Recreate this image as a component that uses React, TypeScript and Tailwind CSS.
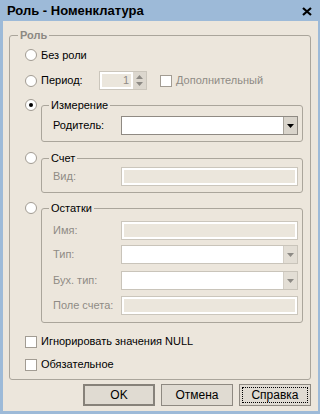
import React from "react";

function Radio({ checked = false }: { checked?: boolean }) {
  return (
    <span className="w-[12px] h-[12px] shrink-0 rounded-full bg-white border border-[#a29c93] flex items-center justify-center">
      {checked && <span className="w-[4px] h-[4px] rounded-full bg-black" />}
    </span>
  );
}

function Check() {
  return <span className="block w-[12px] h-[12px] shrink-0 bg-white border border-[#a29c93]" />;
}

function Arrow({ color }: { color: string }) {
  return (
    <svg width="7" height="4" viewBox="0 0 7 4">
      <path d="M0 0H7L3.5 4Z" fill={color} />
    </svg>
  );
}

// combo box with a drop-down button on the right
function Combo({ disabled = false }: { disabled?: boolean }) {
  return (
    <div
      className={
        disabled
          ? "flex-1 h-[19px] flex bg-white border border-[#c9c4ba]"
          : "flex-1 h-[19px] flex bg-white border border-[#8f8a83]"
      }
    >
      <div className="flex-1" />
      <div
        className={
          disabled
            ? "w-[14px] flex items-center justify-center bg-[#e3ded5] border-l border-[#d3cec5]"
            : "w-[14px] flex items-center justify-center bg-[#d9d4cb] border-l border-[#a8a39a]"
        }
      >
        <Arrow color={disabled ? "#8d8a85" : "#000"} />
      </div>
    </div>
  );
}

function Field() {
  return (
    <div className="flex-1 h-[19px] border border-[#cbc6bc]">
      <div className="h-full border-2 border-white bg-[#ebe6dc]" />
    </div>
  );
}

function Row({ label, mt, children }: { label: string; mt: string; children: React.ReactNode }) {
  return (
    <div className={`flex items-center ${mt}`}>
      <span className="w-[68px] text-[#8f8b85]">{label}</span>
      {children}
    </div>
  );
}

function Group({ title, children }: { title: string; children: React.ReactNode }) {
  return (
    <fieldset className="flex-1 border border-[#aaa59b] rounded-[3px] min-w-0">
      <legend className="ml-[7px] px-[2px] leading-[14px]">{title}</legend>
      {children}
    </fieldset>
  );
}

function Button({ label, main = false, focus = false }: { label: string; main?: boolean; focus?: boolean }) {
  return (
    <div
      className={
        main
          ? "w-[72px] h-[22px] border-2 border-[#87827a] bg-[#e0dbd2] flex items-center justify-center"
          : "w-[72px] h-[22px] border border-[#8e8981] bg-[#e0dbd2] flex items-center justify-center p-[2px]"
      }
    >
      <span
        className={
          focus
            ? "w-full h-full border border-dotted border-black flex items-center justify-center text-[12px]"
            : "text-[12px]"
        }
      >
        {label}
      </span>
    </div>
  );
}

export default function App() {
  return (
    <div className="w-[320px] h-[414px] bg-[#9dbad8] flex flex-col font-['Liberation_Sans',Arial,sans-serif] text-[11px] leading-[13px] text-black">
      <div className="h-[21px] shrink-0 flex items-center justify-between pl-[7px] pr-[8px]">
        <span className="text-[13px] font-bold">Роль - Номенклатура</span>
        <svg width="10" height="9" viewBox="0 0 10 9" className="mt-[1px]">
          <path d="M1 1L9 8M9 1L1 8" stroke="#000" strokeWidth="2.2" />
        </svg>
      </div>

      <div className="flex-1 ml-[3px] mr-[2px] mb-[3px] bg-[#ece6dc] flex flex-col pt-[7px] pl-[6px] pr-[7px] pb-[5px]">
        <fieldset className="border border-[#aaa59b] rounded-[3px] min-w-0">
          <legend className="ml-[8px] px-[2px] leading-[14px] font-bold text-[#8d8983]">Роль</legend>
          <div className="flex flex-col pl-[15px] pr-[7px] pb-[8px]">
            <div className="h-[26px] flex items-center gap-[4px]">
              <Radio />
              <span>Без роли</span>
            </div>

            <div className="h-[25px] flex items-center">
              <Radio />
              <span className="ml-[4px] w-[58px]">Период:</span>
              <div className="w-[48px] h-[19px] flex border border-[#cbc6bc]">
                <div className="flex-1 border-2 border-white bg-[#ebe6dc] flex items-center justify-end pr-[2px] text-[#8f8b85]">
                  1
                </div>
                <div className="w-[13px] bg-[#dcd7ce] flex flex-col items-center justify-center gap-[3px]">
                  <svg width="7" height="4" viewBox="0 0 7 4">
                    <path d="M0 4H7L3.5 0Z" fill="#8d8a85" />
                  </svg>
                  <Arrow color="#8d8a85" />
                </div>
              </div>
              <div className="ml-[13px] flex items-center gap-[4px]">
                <Check />
                <span className="text-[#8f8b85]">Дополнительный</span>
              </div>
            </div>

            <div className="mt-[5px] flex items-start gap-[4px]">
              <span className="h-[14px] flex items-center">
                <Radio checked />
              </span>
              <Group title="Измерение">
                <div className="pt-[4px] pb-[6px] pl-[11px] pr-[4px] flex items-center">
                  <span className="w-[68px]">Родитель:</span>
                  <Combo />
                </div>
              </Group>
            </div>

            <div className="mt-[9px] flex items-start gap-[4px]">
              <span className="h-[14px] flex items-center">
                <Radio />
              </span>
              <Group title="Счет">
                <div className="pt-[2px] pb-[6px] pl-[11px] pr-[4px]">
                  <Row label="Вид:" mt="">
                    <Field />
                  </Row>
                </div>
              </Group>
            </div>

            <div className="mt-[8px] flex items-start gap-[4px]">
              <span className="h-[14px] flex items-center">
                <Radio />
              </span>
              <Group title="Остатки">
                <div className="pt-[6px] pb-[7px] pl-[11px] pr-[4px] flex flex-col">
                  <Row label="Имя:" mt="">
                    <Field />
                  </Row>
                  <Row label="Тип:" mt="mt-[5px]">
                    <Combo disabled />
                  </Row>
                  <Row label="Бух. тип:" mt="mt-[7px]">
                    <Combo disabled />
                  </Row>
                  <Row label="Поле счета:" mt="mt-[6px]">
                    <Field />
                  </Row>
                </div>
              </Group>
            </div>

            <div className="mt-[12px] h-[13px] flex items-center gap-[4px]">
              <Check />
              <span>Игнорировать значения NULL</span>
            </div>
            <div className="mt-[10px] h-[13px] flex items-center gap-[4px]">
              <Check />
              <span>Обязательное</span>
            </div>
          </div>
        </fieldset>

        <div className="mt-[4px] flex justify-end gap-[6px]">
          <Button label="OK" main />
          <Button label="Отмена" />
          <Button label="Справка" focus />
        </div>
      </div>
    </div>
  );
}
